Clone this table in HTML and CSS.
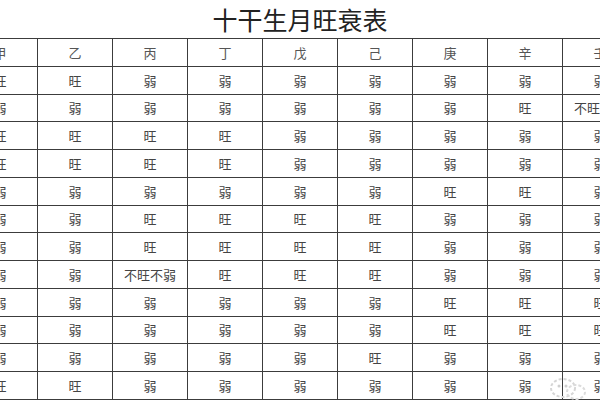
FILE: index.html
```html
<!DOCTYPE html>
<html lang="zh-CN">
<head>
<meta charset="utf-8">
<link rel="stylesheet" href="styles.css">
</head>
<body>
<div class="page">
  <h1 class="title">十干生月旺衰表</h1>
  <div class="table">
    <div class="cell head">甲</div><div class="cell head">乙</div><div class="cell head">丙</div><div class="cell head">丁</div><div class="cell head">戊</div><div class="cell head">己</div><div class="cell head">庚</div><div class="cell head">辛</div><div class="cell head">壬</div>

    <div class="cell">旺</div><div class="cell">旺</div><div class="cell">弱</div><div class="cell">弱</div><div class="cell">弱</div><div class="cell">弱</div><div class="cell">弱</div><div class="cell">弱</div><div class="cell">弱</div>
    <div class="cell">弱</div><div class="cell">弱</div><div class="cell">弱</div><div class="cell">弱</div><div class="cell">弱</div><div class="cell">弱</div><div class="cell">弱</div><div class="cell">旺</div><div class="cell">不旺不弱</div>
    <div class="cell">旺</div><div class="cell">旺</div><div class="cell">旺</div><div class="cell">旺</div><div class="cell">弱</div><div class="cell">弱</div><div class="cell">弱</div><div class="cell">弱</div><div class="cell">弱</div>
    <div class="cell">旺</div><div class="cell">旺</div><div class="cell">旺</div><div class="cell">旺</div><div class="cell">弱</div><div class="cell">弱</div><div class="cell">弱</div><div class="cell">弱</div><div class="cell">弱</div>
    <div class="cell">弱</div><div class="cell">弱</div><div class="cell">弱</div><div class="cell">弱</div><div class="cell">弱</div><div class="cell">弱</div><div class="cell">旺</div><div class="cell">旺</div><div class="cell">弱</div>
    <div class="cell">弱</div><div class="cell">弱</div><div class="cell">旺</div><div class="cell">旺</div><div class="cell">旺</div><div class="cell">旺</div><div class="cell">弱</div><div class="cell">弱</div><div class="cell">弱</div>
    <div class="cell">弱</div><div class="cell">弱</div><div class="cell">旺</div><div class="cell">旺</div><div class="cell">旺</div><div class="cell">旺</div><div class="cell">弱</div><div class="cell">弱</div><div class="cell">弱</div>
    <div class="cell">弱</div><div class="cell">弱</div><div class="cell">不旺不弱</div><div class="cell">旺</div><div class="cell">旺</div><div class="cell">旺</div><div class="cell">弱</div><div class="cell">弱</div><div class="cell">弱</div>
    <div class="cell">弱</div><div class="cell">弱</div><div class="cell">弱</div><div class="cell">弱</div><div class="cell">弱</div><div class="cell">弱</div><div class="cell">旺</div><div class="cell">旺</div><div class="cell">旺</div>
    <div class="cell">弱</div><div class="cell">弱</div><div class="cell">弱</div><div class="cell">弱</div><div class="cell">弱</div><div class="cell">弱</div><div class="cell">旺</div><div class="cell">旺</div><div class="cell">旺</div>
    <div class="cell">弱</div><div class="cell">弱</div><div class="cell">弱</div><div class="cell">弱</div><div class="cell">弱</div><div class="cell">旺</div><div class="cell">弱</div><div class="cell">弱</div><div class="cell">弱</div>
    <div class="cell">旺</div><div class="cell">旺</div><div class="cell">弱</div><div class="cell">弱</div><div class="cell">弱</div><div class="cell">弱</div><div class="cell">弱</div><div class="cell">弱</div><div class="cell">弱</div>
  </div>
  <svg class="watermark" width="40" height="26" viewBox="0 0 40 26">
    <ellipse cx="15" cy="14" rx="12" ry="9" fill="none" stroke="#d6d6d6" stroke-width="2" stroke-dasharray="3 2"/>
    <ellipse cx="28" cy="18" rx="9" ry="7" fill="none" stroke="#dcdcdc" stroke-width="2" stroke-dasharray="3 2"/>
    <circle cx="11" cy="12" r="1.5" fill="#cfcfcf"/>
    <circle cx="18" cy="12" r="1.5" fill="#cfcfcf"/>
  </svg>
</div>
</body>
</html>
```

FILE: styles.css
```css
html, body {
  margin: 0;
  padding: 0;
  background: #ffffff;
}

.page {
  position: relative;
  width: 600px;
  height: 400px;
  overflow: hidden;
}

.title {
  margin: 0;
  height: 38px;
  box-sizing: border-box;
  padding-top: 3px;
  text-align: center;
  font-family: "Noto Sans CJK SC", sans-serif;
  font-size: 25px;
  font-weight: 400;
  line-height: 32px;
  color: #222;
}

.table {
  display: grid;
  grid-template-columns: repeat(9, 75px);
  grid-auto-rows: 27.75px;
  margin-left: -38px;
  width: 676px;
  border-top: 1px solid #3c3c3c;
  border-left: 1px solid #3c3c3c;
}

.cell {
  box-sizing: border-box;
  border-right: 1px solid #3c3c3c;
  border-bottom: 1px solid #3c3c3c;
  display: flex;
  align-items: center;
  justify-content: center;
  font-family: "Noto Sans CJK SC", sans-serif;
  font-size: 13px;
  color: #444;
  white-space: nowrap;
}

.head {
  color: #555;
}

.watermark {
  position: absolute;
  left: 548px;
  top: 374px;
}
```
